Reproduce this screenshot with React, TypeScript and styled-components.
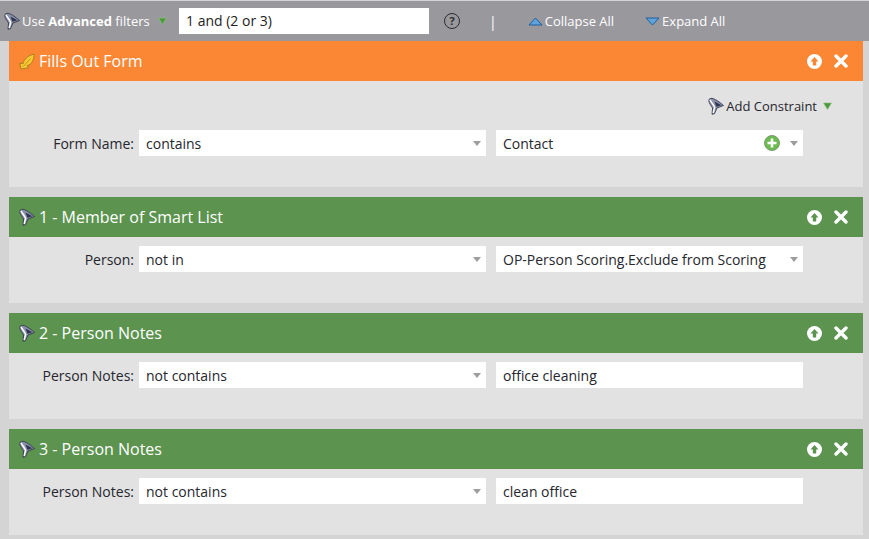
import { createGlobalStyle, styled } from "styled-components";

const GlobalStyle = createGlobalStyle`
    html, body {
        margin: 0;
        padding: 0;
        height: 100%;
        background-color: #d4d4d4;
        font-family: "Open Sans", "Liberation Sans", sans-serif;
    }
`;

type Row = {
    label: string;
    operator: string;
    value: string;
    valueSelect?: boolean;
    addButton?: boolean;
};

type Filter = {
    title: string;
    orange?: boolean;
    constraint?: boolean;
    row: Row;
};

const filters: Filter[] = [
    {
        title: "Fills Out Form",
        orange: true,
        constraint: true,
        row: { label: "Form Name:", operator: "contains", value: "Contact", valueSelect: true, addButton: true },
    },
    {
        title: "1 - Member of Smart List",
        row: { label: "Person:", operator: "not in", value: "OP-Person Scoring.Exclude from Scoring", valueSelect: true },
    },
    {
        title: "2 - Person Notes",
        row: { label: "Person Notes:", operator: "not contains", value: "office cleaning" },
    },
    {
        title: "3 - Person Notes",
        row: { label: "Person Notes:", operator: "not contains", value: "clean office" },
    },
];

const FunnelIcon = () => (
    <svg width="16" height="18" viewBox="0 0 16 18">
        <path d="M1 2.5 C3 0.2 6.5 0.8 15.5 8.5 L9 11 L6.4 16.8 L4 17.2 L4.6 11 C2.4 8 0.2 4.8 1 2.5 Z" fill="#8b91ab" stroke="#2b2f45" strokeWidth="0.8" strokeLinejoin="round" />
        <path d="M2 2.8 C3.4 5.6 6 8 6.6 10.4 L5.2 16" fill="none" stroke="#ffffff" strokeWidth="1.5" />
        <path d="M6.6 4.4 L13.4 8.3 L8.4 9.8 Z" fill="#2f344e" />
    </svg>
);

const FormIcon = () => (
    <svg width="16" height="17" viewBox="0 0 16 17">
        <path d="M2 16 L0.8 10 L4 10.8 C5 6 9 2.6 15 1 C15.4 6 13 11.4 8.2 12.6 L9.4 14.8 Z" fill="#f5c733" stroke="#a8791a" strokeWidth="0.9" strokeLinejoin="round" />
        <path d="M4 13.8 L11.4 5.6" stroke="#c2921f" strokeWidth="0.9" />
    </svg>
);

const GreenCaret = () => (
    <svg width="9" height="8" viewBox="0 0 9 8">
        <path d="M0.5 1 H8.5 L4.5 7.5 Z" fill="#4d9a3c" stroke="#8fc483" strokeWidth="0.6" />
    </svg>
);

const UpIcon = () => (
    <svg width="15" height="15" viewBox="0 0 15 15">
        <circle cx="7.5" cy="7.5" r="7.5" fill="#fff" />
        <path d="M7.5 3 L11.5 7.5 H9.2 V11.5 H5.8 V7.5 H3.5 Z" fill="currentColor" />
    </svg>
);

const CloseIcon = () => (
    <svg width="14" height="14" viewBox="0 0 14 14">
        <path d="M2 2 L12 12 M12 2 L2 12" stroke="#fff" strokeWidth="3.4" strokeLinecap="round" />
    </svg>
);

const PlusIcon = () => (
    <svg width="16" height="16" viewBox="0 0 16 16">
        <circle cx="8" cy="8" r="7.5" fill="#6cbb4f" stroke="#7f9b78" />
        <path d="M8 3.5 V12.5 M3.5 8 H12.5" stroke="#fff" strokeWidth="2.6" />
    </svg>
);

const App = () => {
    return (
        <>
            <GlobalStyle />
            <Page>
                <Toolbar>
                    <AdvancedToggle>
                        <FunnelIcon />
                        <span>Use <b>Advanced</b> filters</span>
                        <GreenCaret />
                    </AdvancedToggle>
                    <RuleInput>1 and (2 or 3)</RuleInput>
                    <HelpIcon>?</HelpIcon>
                    <Divider>|</Divider>
                    <ToolbarAction>
                        <svg width="15" height="9" viewBox="0 0 15 9">
                            <path d="M7.5 1 L14 8 H1 Z" fill="#5fa3dc" stroke="#1f5f9c" />
                        </svg>
                        Collapse All
                    </ToolbarAction>
                    <ToolbarAction>
                        <svg width="15" height="9" viewBox="0 0 15 9">
                            <path d="M1 1 H14 L7.5 8 Z" fill="#5fa3dc" stroke="#1f5f9c" />
                        </svg>
                        Expand All
                    </ToolbarAction>
                </Toolbar>
                <FilterList>
                    {filters.map((filter) => (
                        <FilterCard key={filter.title}>
                            <FilterHeader $orange={filter.orange}>
                                {filter.orange ? <FormIcon /> : <FunnelIcon />}
                                <FilterTitle>{filter.title}</FilterTitle>
                                <HeaderButtons $orange={filter.orange}>
                                    <UpIcon />
                                    <CloseIcon />
                                </HeaderButtons>
                            </FilterHeader>
                            <FilterBody $tall={filter.constraint}>
                                {filter.constraint && (
                                    <ConstraintRow>
                                        <FunnelIcon />
                                        Add Constraint
                                        <GreenCaret />
                                    </ConstraintRow>
                                )}
                                <FieldRow>
                                    <FieldLabel>{filter.row.label}</FieldLabel>
                                    <OperatorField>
                                        {filter.row.operator}
                                        <SelectCaret />
                                    </OperatorField>
                                    <ValueField>
                                        <ValueText>{filter.row.value}</ValueText>
                                        {filter.row.addButton && <PlusIcon />}
                                        {filter.row.valueSelect && <SelectCaret />}
                                    </ValueField>
                                </FieldRow>
                            </FilterBody>
                        </FilterCard>
                    ))}
                </FilterList>
            </Page>
        </>
    );
};

const Page = styled.div`
    width: 869px;
    height: 539px;
    overflow: hidden;
`;

const Toolbar = styled.div`
    height: 40px;
    margin-top: 1px;
    padding-left: 4px;
    display: flex;
    align-items: center;
    background-color: #99989d;
    color: #fff;
    font-size: 13px;
`;

const AdvancedToggle = styled.div`
    width: 175px;
    display: flex;
    align-items: center;
    gap: 2px;

    & span {
        margin-right: 6px;
    }
`;

const RuleInput = styled.div`
    width: 250px;
    height: 26px;
    line-height: 26px;
    padding-left: 7px;
    box-sizing: border-box;
    background-color: #fff;
    color: #222;
    font-size: 14px;
`;

const HelpIcon = styled.div`
    width: 14px;
    height: 14px;
    margin-left: 15px;
    border: 1.5px solid #2d2d2d;
    border-radius: 50%;
    color: #2d2d2d;
    font-size: 11px;
    font-weight: 700;
    line-height: 14px;
    text-align: center;
`;

const Divider = styled.div`
    margin-left: 29px;
    font-size: 14px;
`;

const ToolbarAction = styled.div`
    margin-left: 31px;
    display: flex;
    align-items: center;
    gap: 2px;
`;

const FilterList = styled.div`
    padding: 0 6px 0 9px;
    display: flex;
    flex-direction: column;
    gap: 10px;
`;

const FilterCard = styled.div`
    background-color: #e2e2e2;
`;

const FilterHeader = styled.div<{ $orange?: boolean }>`
    height: 40px;
    padding: 0 15px 0 10px;
    display: flex;
    align-items: center;
    gap: 4px;
    color: #fff;
    background-color: ${(props) => (props.$orange ? "#fb8734" : "#5b934f")};
`;

const FilterTitle = styled.div`
    flex: 1;
    font-size: 16px;
`;

const HeaderButtons = styled.div<{ $orange?: boolean }>`
    display: flex;
    align-items: center;
    gap: 12px;
    color: ${(props) => (props.$orange ? "#fb8734" : "#5b934f")};
`;

const FilterBody = styled.div<{ $tall?: boolean }>`
    height: ${(props) => (props.$tall ? "106px" : "66px")};
    box-sizing: border-box;
    padding-top: ${(props) => (props.$tall ? "16px" : "9px")};
`;

const ConstraintRow = styled.div`
    height: 18px;
    margin-bottom: 15px;
    padding-right: 31px;
    display: flex;
    justify-content: flex-end;
    align-items: center;
    gap: 2px;
    color: #26262e;
    font-size: 13px;

    & svg:last-child {
        margin-left: 4px;
    }
`;

const FieldRow = styled.div`
    height: 26px;
    display: flex;
    align-items: center;
    gap: 10px;
    color: #26262e;
    font-size: 14px;
`;

const FieldLabel = styled.div`
    width: 125px;
    margin-right: -5px;
    text-align: right;
`;

const OperatorField = styled.div`
    width: 347px;
    height: 26px;
    padding: 0 4px 0 7px;
    box-sizing: border-box;
    display: flex;
    align-items: center;
    justify-content: space-between;
    background-color: #fff;
`;

const ValueField = styled(OperatorField)`
    width: 307px;
    gap: 10px;
`;

const ValueText = styled.div`
    flex: 1;
`;

const SelectCaret = styled.i`
    width: 0;
    height: 0;
    margin-right: 1.5px;
    border-left: 4.5px solid transparent;
    border-right: 4.5px solid transparent;
    border-top: 5px solid #9d9d9d;
`;

export default App;
